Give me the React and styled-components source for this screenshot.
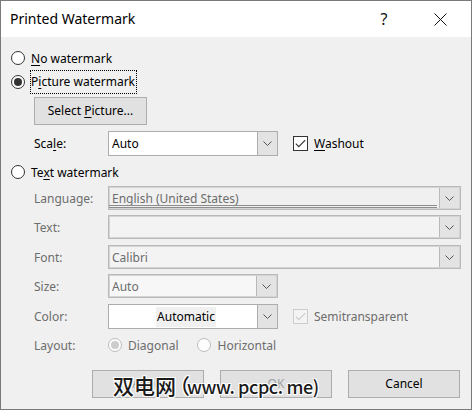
import React from 'react'
import styled, { createGlobalStyle } from 'styled-components'

const GlobalStyle = createGlobalStyle`
  html, body {
    margin: 0;
    padding: 0;
    background: #f0f0f0;
  }
  * {
    box-sizing: border-box;
  }
`

const Window = styled.div`
  width: 472px;
  height: 410px;
  position: relative;
  display: flex;
  flex-direction: column;
  background: #f0f0f0;
  border: 1px solid #7a7a7a;
  font-family: "Segoe UI", "Noto Sans", "Open Sans", sans-serif;
  font-size: 12px;
  color: #000;
`

const TitleBar = styled.div`
  height: 36px;
  flex: none;
  display: flex;
  align-items: center;
  background: #fff;
  padding-left: 9px;
  padding-right: 8px;
`

const Title = styled.div`
  flex: 1;
  font-size: 14px;
  color: #000;
  padding-bottom: 1px;
`

const TitleButton = styled.div`
  width: ${p => p.$w || 46}px;
  height: 36px;
  display: flex;
  align-items: center;
  justify-content: center;
  font-size: 16px;
  color: #111;
`

const Body = styled.div`
  flex: 1;
  display: flex;
  flex-direction: column;
  padding: 9px 10px 0 10px;
`

const Row = styled.div`
  display: flex;
  align-items: center;
  height: ${p => p.$h || 24}px;
  margin-top: ${p => p.$mt || 0}px;
  padding-left: ${p => p.$indent || 0}px;
`

const RadioLabel = styled.label`
  display: flex;
  align-items: center;
  gap: 6px;
  color: ${p => (p.$disabled ? '#6d6d6d' : '#000')};
  margin-right: ${p => p.$mr || 0}px;
`

const RadioCircle = styled.span`
  width: 14px;
  height: 14px;
  border-radius: 50%;
  border: 1px solid ${p => (p.$disabled ? '#bcbcbc' : '#333')};
  background: ${p => (p.$disabled ? '#fdfdfd' : '#fff')};
  display: flex;
  align-items: center;
  justify-content: center;

  &::after {
    content: '';
    width: 8px;
    height: 8px;
    border-radius: 50%;
    background: ${p => (p.$disabled ? '#cccccc' : '#333')};
    display: ${p => (p.$checked ? 'block' : 'none')};
  }
`

const Focus = styled.span`
  outline: 1px dotted #000;
  outline-offset: 0;
  padding: 2px 1px 3px 0;
`

const U = styled.span`
  text-decoration: underline;
  text-underline-offset: 2px;
`

const Button = styled.div`
  width: ${p => p.$w || 112}px;
  height: 28px;
  display: flex;
  align-items: center;
  justify-content: center;
  background: #e1e1e1;
  border: 1px solid #adadad;
  color: ${p => (p.$disabled ? '#a0a0a0' : '#000')};
  padding-bottom: 1px;
`

const Label = styled.div`
  width: 74px;
  flex: none;
  color: ${p => (p.$disabled ? '#6d6d6d' : '#000')};
`

const Combo = styled.div`
  width: ${p => p.$w}px;
  height: ${p => p.$h || 24}px;
  display: flex;
  border: 1px solid ${p => (p.$disabled ? '#b9b9b9' : '#adadad')};
  box-shadow: ${p => (p.$disabled ? 'inset 0 0 0 1px #d4d4d4' : 'none')};
  background: ${p => p.$bg || '#fff'};
`

const ComboText = styled.div`
  flex: 1;
  display: flex;
  align-items: center;
  justify-content: ${p => (p.$center ? 'center' : 'flex-start')};
  padding-left: ${p => (p.$center ? 0 : 3)}px;
  color: ${p => (p.$disabled ? '#6d6d6d' : '#000')};
  position: relative;
`

const Highlight = styled.span`
  background: #f0f0f0;
  padding: 1px 1px 2px;
  margin-left: 6px;
`

const DoubleLine = styled.div`
  position: absolute;
  left: 0;
  right: 2px;
  bottom: 1px;
  height: 3px;
  border-top: 1px solid #8c8c8c;
  border-bottom: 1px solid #8c8c8c;
`

const DropButton = styled.div`
  width: 20px;
  flex: none;
  display: flex;
  align-items: center;
  justify-content: center;
  background: #e3e3e3;
  border-left: 1px solid ${p => (p.$disabled ? '#b9b9b9' : '#adadad')};
  margin: ${p => (p.$disabled ? '1px 1px 1px 0' : '0')};
`

const Check = styled.label`
  display: flex;
  align-items: center;
  gap: 6px;
  margin-left: 15px;
  color: ${p => (p.$disabled ? '#6d6d6d' : '#000')};
`

const CheckBox = styled.span`
  width: 15px;
  height: 15px;
  border: 1px solid ${p => (p.$disabled ? '#cccccc' : '#333')};
  background: ${p => (p.$disabled ? '#f4f4f4' : '#fff')};
  display: flex;
  align-items: center;
  justify-content: center;
`

const ButtonBar = styled.div`
  display: flex;
  justify-content: flex-end;
  gap: 16px;
  margin-top: 15px;
  padding-right: 1px;
  position: relative;
`

const Stamp = styled.div`
  position: absolute;
  left: 102px;
  top: 0px;
  display: flex;
  align-items: baseline;
  font-family: "Noto Sans CJK SC", "Noto Sans", sans-serif;
  font-size: 21px;
  font-weight: 500;
  color: #1a1a1a;
  white-space: nowrap;
  text-shadow: 1px 1px 0 #fff, -1px -1px 0 #fff, 1px -1px 0 #fff, -1px 1px 0 #fff, 0 1px 0 #fff, 1px 0 0 #fff;
`

const StampParen = styled.span`
  margin-left: -7px;
`

const StampLatin = styled.span`
  font-size: 18px;
  letter-spacing: -0.4px;
  margin-left: -3px;
`

const Chevron = ({ color = '#555' }) => (
  <svg width="9" height="5" viewBox="0 0 9 5">
    <path d="M0.5 0.5 L4.5 4.5 L8.5 0.5" fill="none" stroke={color} strokeWidth="1" />
  </svg>
)

const Tick = ({ color }) => (
  <svg width="11" height="9" viewBox="0 0 11 9">
    <path d="M0.8 4.6 L3.8 7.6 L10.2 1.2" fill="none" stroke={color} strokeWidth="1.2" />
  </svg>
)

const Radio = ({ checked, disabled, children, mr }) => (
  <RadioLabel $disabled={disabled} $mr={mr}>
    <RadioCircle $checked={checked} $disabled={disabled} />
    {children}
  </RadioLabel>
)

const Dropdown = ({ w, h, text, disabled, bg, center, lines }) => (
  <Combo $w={w} $h={h} $disabled={disabled} $bg={bg}>
    <ComboText $disabled={disabled} $center={center}>
      {center ? <Highlight>{text}</Highlight> : text}
      {lines && <DoubleLine />}
    </ComboText>
    <DropButton $disabled={disabled}>
      <Chevron />
    </DropButton>
  </Combo>
)

export default function App() {
  return (
    <>
      <GlobalStyle />
      <Window>
        <TitleBar>
          <Title>Printed Watermark</Title>
          <TitleButton $w={66}>?</TitleButton>
          <TitleButton>
            <svg width="13" height="13" viewBox="0 0 13 13">
              <path d="M0.5 0.5 L12.5 12.5 M12.5 0.5 L0.5 12.5" stroke="#111" strokeWidth="1" />
            </svg>
          </TitleButton>
        </TitleBar>
        <Body>
          <Row>
            <Radio><span><U>N</U>o watermark</span></Radio>
          </Row>
          <Row>
            <Radio checked><Focus>P<U>i</U>cture watermark</Focus></Radio>
          </Row>
          <Row $h={28} $mt={3} $indent={23}>
            <Button $w={113}><span>Select <U>P</U>icture...</span></Button>
          </Row>
          <Row $h={25} $mt={6} $indent={23}>
            <Label>Sca<U>l</U>e:</Label>
            <Dropdown w={170} h={25} text="Auto" />
            <Check>
              <CheckBox><Tick color="#333" /></CheckBox>
              <span><U>W</U>ashout</span>
            </Check>
          </Row>
          <Row $mt={4}>
            <Radio><span>Te<U>x</U>t watermark</span></Radio>
          </Row>
          <Row $mt={2} $indent={23}>
            <Label $disabled>Language:</Label>
            <Dropdown w={354} text="English (United States)" disabled bg="#f0f0f0" lines />
          </Row>
          <Row $mt={5} $indent={23}>
            <Label $disabled>Text:</Label>
            <Dropdown w={354} text="" disabled bg="#f3f3f3" />
          </Row>
          <Row $mt={6} $indent={23}>
            <Label $disabled>Font:</Label>
            <Dropdown w={354} text="Calibri" disabled bg="#f3f3f3" />
          </Row>
          <Row $mt={5} $indent={23}>
            <Label $disabled>Size:</Label>
            <Dropdown w={170} text="Auto" disabled bg="#f7f7f7" />
          </Row>
          <Row $h={25} $mt={6} $indent={23}>
            <Label $disabled>Color:</Label>
            <Dropdown w={170} h={25} text="Automatic" center />
            <Check $disabled>
              <CheckBox $disabled><Tick color="#cccccc" /></CheckBox>
              <span>Semitransparent</span>
            </Check>
          </Row>
          <Row $h={20} $mt={6} $indent={23}>
            <Label $disabled>Layout:</Label>
            <Radio checked disabled mr={19}>Diagonal</Radio>
            <Radio disabled>Horizontal</Radio>
          </Row>
          <ButtonBar>
            <Button $disabled>Apply</Button>
            <Button $disabled>OK</Button>
            <Button>Cancel</Button>
            <Stamp>
              <span>双电网</span>
              <StampParen>（</StampParen>
              <StampLatin>www. pcpc. me)</StampLatin>
            </Stamp>
          </ButtonBar>
        </Body>
      </Window>
    </>
  )
}
